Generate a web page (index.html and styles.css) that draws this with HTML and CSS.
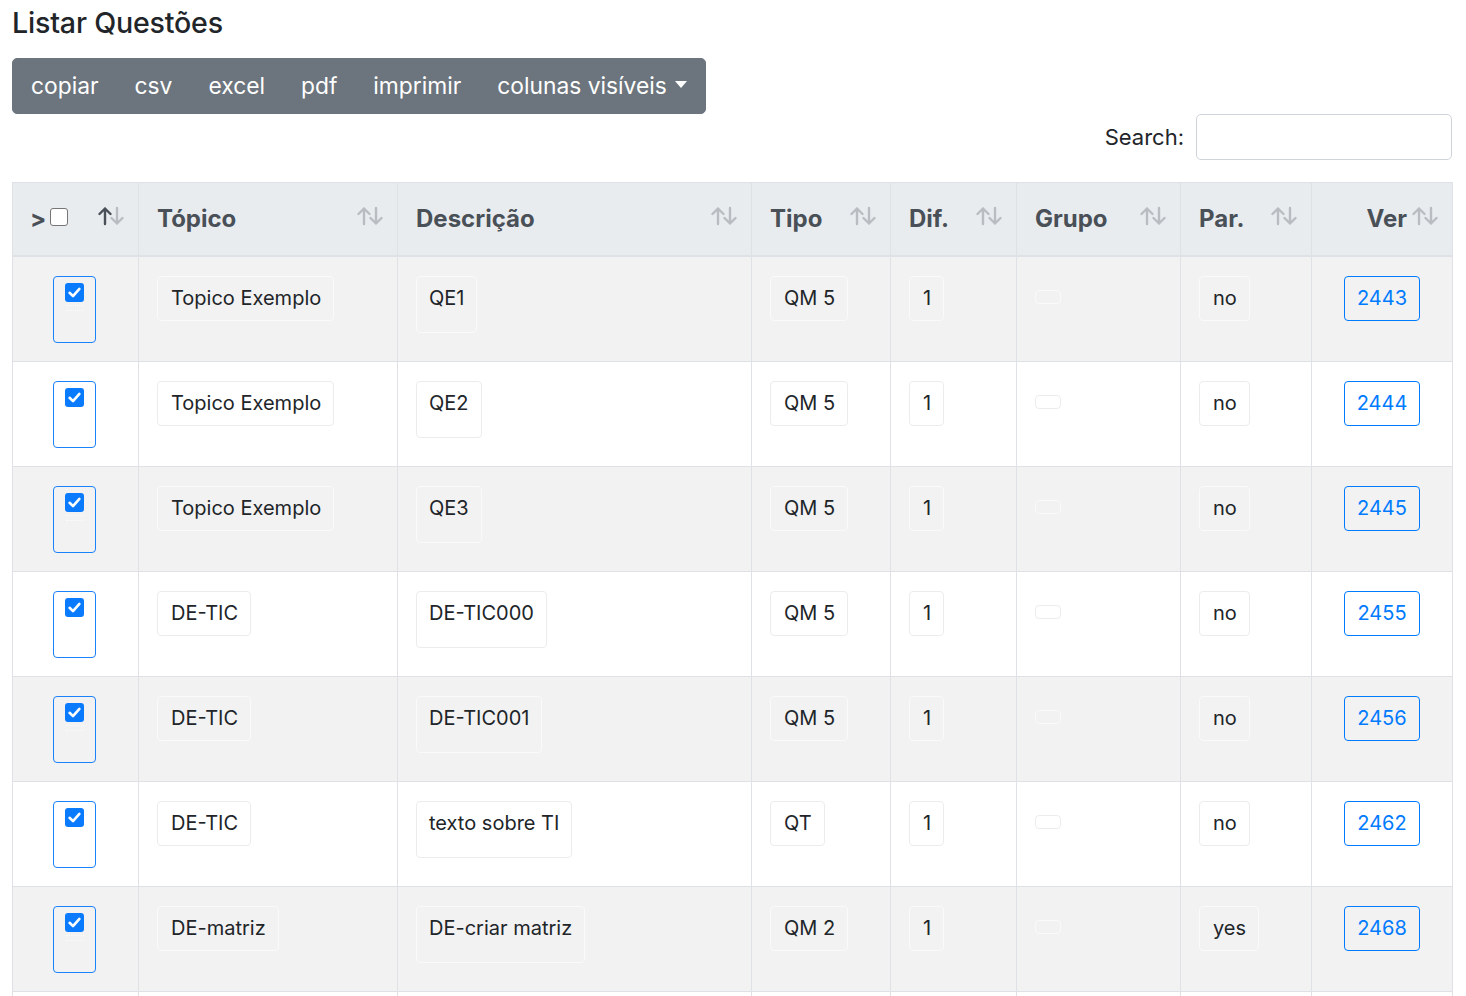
FILE: index.html
```html
<!DOCTYPE html>
<html lang="pt">
<head>
<meta charset="utf-8">
<title>Listar Questões</title>
<link rel="stylesheet" href="styles.css">
</head>
<body>
<div class="page">
  <h3 class="title">Listar Questões</h3>
  <div class="btn-group">
    <button class="btn">copiar</button>
    <button class="btn">csv</button>
    <button class="btn">excel</button>
    <button class="btn">pdf</button>
    <button class="btn">imprimir</button>
    <button class="btn">colunas visíveis<span class="caret"></span></button>
  </div>
  <div class="search-row">
    <label class="search-label" for="q">Search:</label>
    <input class="search-input" id="q" type="search">
  </div>
  <table class="grid">
    <colgroup>
      <col class="c-sel"><col class="c-top"><col class="c-desc"><col class="c-tipo"><col class="c-dif"><col class="c-grp"><col class="c-par"><col class="c-ver">
    </colgroup>
    <thead>
      <tr>
        <th><div class="thc"><span class="selh"><span class="gt">&gt;</span><span class="cb-empty"></span></span><svg class="sort active" viewBox="0 0 26 20"><g fill="none" stroke-width="2.4" stroke-linecap="round" stroke-linejoin="round"><path class="up" d="M7 18V2.5M1.5 8L7 2.5 12.5 8"/><path class="dn" d="M19 2v15.5M13.5 12L19 17.5 24.5 12"/></g></svg></div></th>
        <th><div class="thc"><span>Tópico</span><svg class="sort" viewBox="0 0 26 20"><g fill="none" stroke-width="2.4" stroke-linecap="round" stroke-linejoin="round"><path class="up" d="M7 18V2.5M1.5 8L7 2.5 12.5 8"/><path class="dn" d="M19 2v15.5M13.5 12L19 17.5 24.5 12"/></g></svg></div></th>
        <th><div class="thc"><span>Descrição</span><svg class="sort" viewBox="0 0 26 20"><g fill="none" stroke-width="2.4" stroke-linecap="round" stroke-linejoin="round"><path class="up" d="M7 18V2.5M1.5 8L7 2.5 12.5 8"/><path class="dn" d="M19 2v15.5M13.5 12L19 17.5 24.5 12"/></g></svg></div></th>
        <th><div class="thc"><span>Tipo</span><svg class="sort" viewBox="0 0 26 20"><g fill="none" stroke-width="2.4" stroke-linecap="round" stroke-linejoin="round"><path class="up" d="M7 18V2.5M1.5 8L7 2.5 12.5 8"/><path class="dn" d="M19 2v15.5M13.5 12L19 17.5 24.5 12"/></g></svg></div></th>
        <th><div class="thc"><span>Dif.</span><svg class="sort" viewBox="0 0 26 20"><g fill="none" stroke-width="2.4" stroke-linecap="round" stroke-linejoin="round"><path class="up" d="M7 18V2.5M1.5 8L7 2.5 12.5 8"/><path class="dn" d="M19 2v15.5M13.5 12L19 17.5 24.5 12"/></g></svg></div></th>
        <th><div class="thc"><span>Grupo</span><svg class="sort" viewBox="0 0 26 20"><g fill="none" stroke-width="2.4" stroke-linecap="round" stroke-linejoin="round"><path class="up" d="M7 18V2.5M1.5 8L7 2.5 12.5 8"/><path class="dn" d="M19 2v15.5M13.5 12L19 17.5 24.5 12"/></g></svg></div></th>
        <th><div class="thc"><span>Par.</span><svg class="sort" viewBox="0 0 26 20"><g fill="none" stroke-width="2.4" stroke-linecap="round" stroke-linejoin="round"><path class="up" d="M7 18V2.5M1.5 8L7 2.5 12.5 8"/><path class="dn" d="M19 2v15.5M13.5 12L19 17.5 24.5 12"/></g></svg></div></th>
        <th><div class="thc right"><span>Ver</span><svg class="sort" viewBox="0 0 26 20"><g fill="none" stroke-width="2.4" stroke-linecap="round" stroke-linejoin="round"><path class="up" d="M7 18V2.5M1.5 8L7 2.5 12.5 8"/><path class="dn" d="M19 2v15.5M13.5 12L19 17.5 24.5 12"/></g></svg></div></th>
      </tr>
    </thead>
    <tbody id="rows"></tbody>
  </table>
</div>
<script src="app.js"></script>
</body>
</html>
```

FILE: app.js
```js
const data = [
  ["Topico Exemplo", "QE1", "QM 5", "1", "no", "2443"],
  ["Topico Exemplo", "QE2", "QM 5", "1", "no", "2444"],
  ["Topico Exemplo", "QE3", "QM 5", "1", "no", "2445"],
  ["DE-TIC", "DE-TIC000", "QM 5", "1", "no", "2455"],
  ["DE-TIC", "DE-TIC001", "QM 5", "1", "no", "2456"],
  ["DE-TIC", "texto sobre TI", "QT", "1", "no", "2462"],
  ["DE-matriz", "DE-criar matriz", "QM 2", "1", "yes", "2468"]
];
const check = '<span class="cb-checked"><svg viewBox="0 0 19 19"><path d="M4.6 9.8L8 13.1 14.4 5.9" fill="none" stroke="#fff" stroke-width="2.6" stroke-linecap="round" stroke-linejoin="round"/></svg></span>';
const body = document.getElementById("rows");
body.innerHTML = data.map(r => `
<tr>
  <td class="center"><div class="selbox">${check}<span class="tiny"></span></div></td>
  <td><span class="chip">${r[0]}</span></td>
  <td><span class="chip desc">${r[1]}</span></td>
  <td><span class="chip">${r[2]}</span></td>
  <td><span class="chip">${r[3]}</span></td>
  <td><span class="chip empty"></span></td>
  <td><span class="chip">${r[4]}</span></td>
  <td class="center"><a class="btn-ver" href="#">${r[5]}</a></td>
</tr>`).join("") + '<tr class="more"><td></td><td></td><td></td><td></td><td></td><td></td><td></td><td></td></tr>';
```

FILE: styles.css
```css
* { box-sizing: border-box; }
html, body { margin: 0; padding: 0; background: #fff; }
body {
  font-family: Inter, "Liberation Sans", "Noto Sans", sans-serif;
  color: #212529;
  font-size: 20px;
}
.page { padding: 0 14px 0 12px; }

.title {
  margin: 0;
  padding-top: 4px;
  font-size: 28.6px;
  line-height: 38px;
  font-weight: 500;
  color: #212529;
  letter-spacing: -0.2px;
}

.btn-group {
  display: inline-flex;
  margin-top: 16px;
  background: #6c757d;
  border: 1px solid #6c757d;
  border-radius: 5px;
}
.btn {
  font-family: inherit;
  font-size: 22.8px;
  line-height: 36px;
  padding: 9px 18px;
  border: 0;
  background: transparent;
  color: #fff;
  display: inline-flex;
  align-items: center;
}
.caret {
  display: inline-block;
  width: 0; height: 0;
  margin-left: 8px;
  border-left: 6px solid transparent;
  border-right: 6px solid transparent;
  border-top: 7px solid #fff;
  margin-top: -3px;
}

.search-row {
  display: flex;
  justify-content: flex-end;
  align-items: center;
  gap: 12px;
}
.search-label { font-size: 22px; }
.search-input {
  width: 256px;
  height: 46px;
  border: 1px solid #ced4da;
  border-radius: 5px;
  background: #fff;
}

.grid {
  margin-top: 22px;
  width: 1440px;
  border-collapse: collapse;
  table-layout: fixed;
  border: 1px solid #dee2e6;
}
.c-sel { width: 126px; }
.c-top { width: 259px; }
.c-desc { width: 354px; }
.c-tipo { width: 139px; }
.c-dif { width: 126px; }
.c-grp { width: 164px; }
.c-par { width: 131px; }
.c-ver { width: 141px; }

.grid th {
  background: #e9ecef;
  color: #495057;
  font-weight: 700;
  font-size: 24px;
  line-height: 32px;
  padding: 20px 14px 20px 18px;
  border: 1px solid #dee2e6;
  border-bottom: 2px solid #dee2e6;
  text-align: left;
}
.thc {
  display: flex;
  align-items: center;
  justify-content: space-between;
}
.thc.right { justify-content: flex-end; gap: 5px; }
.selh { display: flex; align-items: center; gap: 4px; }
.gt { font-size: 24px; margin-left: -1px; }
.cb-empty {
  width: 18px; height: 18px;
  border: 1px solid #767676;
  border-radius: 3px;
  background: #fff;
  margin-top: -4px;
}
.sort { width: 26px; height: 20px; flex: none; margin-top: -6px; }
.sort .up, .sort .dn { stroke: #b9bdc1; }
.sort.active .up { stroke: #495057; }

.grid td {
  border: 1px solid #dee2e6;
  padding: 19px 19px 18px 19px;
  vertical-align: top;
}
.grid tbody tr:nth-child(odd) td { background: #f2f2f2; }
.grid td.center { text-align: center; }
.grid tr.more td { height: 105px; }

.selbox {
  display: inline-flex;
  flex-direction: column;
  align-items: center;
  width: 43px;
  height: 67px;
  border: 1px solid #1a82fb;
  border-radius: 4px;
  padding-top: 6px;
  vertical-align: top;
  margin-left: -2px;
}
.cb-checked {
  width: 19px; height: 19px;
  background: #0a7bff;
  border-radius: 3px;
  display: block;
}
.cb-checked svg { width: 19px; height: 19px; display: block; }
.tiny {
  margin-top: 3px;
  width: 18px; height: 6px;
  border-top: 1px dotted rgba(255,255,255,.7);
  border-bottom: 1px dotted rgba(255,255,255,.7);
}

.chip {
  display: inline-block;
  font-size: 20px;
  line-height: 29px;
  padding: 7px 12px 7px 13px;
  border: 1px solid #ececee;
  border-radius: 4px;
  vertical-align: top;
  margin-left: -1px;
}
.grid tbody tr:nth-child(odd) .chip { border-color: #fafafa; }
.chip.desc { padding-bottom: 19px; padding-left: 12px; }
.chip.empty {
  width: 26px; height: 14px;
  padding: 0;
  margin-top: 14px;
  border-radius: 4px;
}

.btn-ver {
  display: inline-block;
  font-size: 20px;
  line-height: 29px;
  padding: 7px 12px;
  color: #007bff;
  border: 1px solid #007bff;
  border-radius: 4px;
  text-decoration: none;
}
```
